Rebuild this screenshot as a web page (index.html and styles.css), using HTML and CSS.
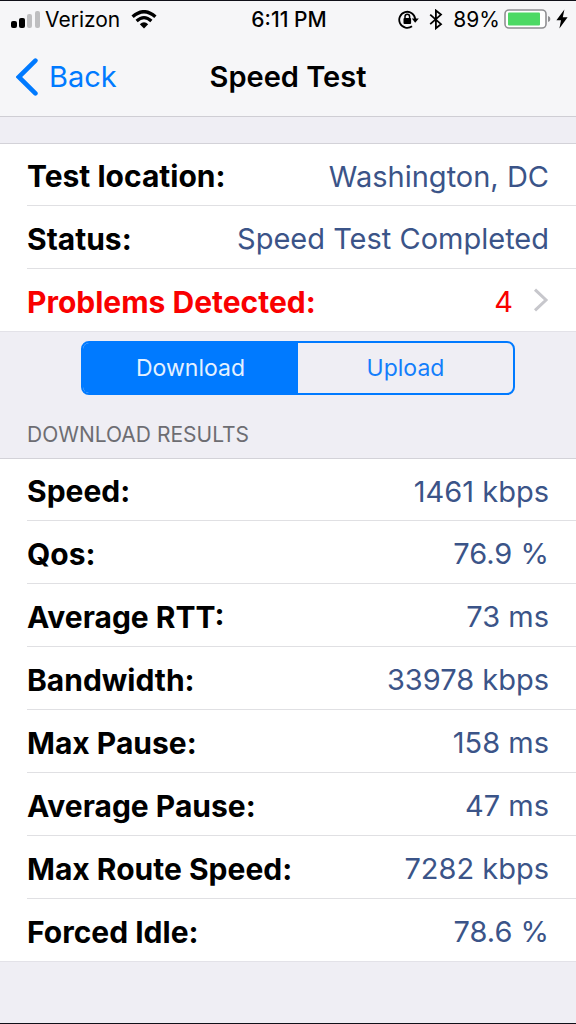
FILE: index.html
```html
<!DOCTYPE html>
<html lang="en">
<head>
<meta charset="utf-8">
<meta name="viewport" content="width=device-width, initial-scale=1">
<title>Speed Test</title>
<link rel="stylesheet" href="styles.css">
</head>
<body>
<header class="header">
  <div class="status-bar">
    <div class="status-left">
      <svg width="30" height="19" viewBox="0 0 30 19" aria-hidden="true">
        <rect x="1" y="11" width="6" height="7" rx="2"/>
        <rect x="9" y="8" width="6" height="10" rx="2"/>
        <rect x="17" y="4" width="5" height="14" rx="2" fill="#bebec0"/>
        <rect x="25" y="1" width="5" height="17" rx="2" fill="#bebec0"/>
      </svg>
      <span>Verizon</span>
      <svg class="wifi" width="26" height="19" viewBox="0 0 26 19" aria-hidden="true">
        <path d="M1.6 6.8Q13-3.4 24.4 6.8" fill="none" stroke="#000" stroke-width="3.4"/>
        <path d="M5.6 11Q13 4.2 20.4 11" fill="none" stroke="#000" stroke-width="3.2"/>
        <path d="M8.8 14.2Q13 10.4 17.2 14.2L13 18.4Z"/>
      </svg>
    </div>
    <time class="clock">6:11 PM</time>
    <div class="status-right">
      <svg width="21" height="19" viewBox="0 0 21 19" aria-hidden="true">
        <path d="M14 16.2A8 8 0 1 1 17.2 9" fill="none" stroke="#000" stroke-width="1.8"/>
        <path d="M13.8 8.4H20.8L17.2 12.8Z"/>
        <rect x="5.5" y="8" width="7.6" height="6" rx="1"/>
        <path d="M7 8.5V6.6a2.3 2.3 0 0 1 4.6 0V8.5" fill="none" stroke="#000" stroke-width="1.5"/>
      </svg>
      <svg class="bluetooth" width="14" height="21" viewBox="0 0 14 21" aria-hidden="true">
        <path d="M1.2 5.6L12 15.2L6.9 19.3V1.5L12 5.6L1.2 15.2" fill="none" stroke="#000" stroke-width="1.8"/>
      </svg>
      <span>89%</span>
      <svg class="battery" width="47" height="20" viewBox="0 0 47 20" aria-hidden="true">
        <rect x="1" y="1" width="41" height="18" rx="4" fill="#fff" stroke="#8f8f92" stroke-width="1.6"/>
        <rect x="4" y="3.5" width="32" height="13" rx="1" fill="#4cd964"/>
        <path d="M44 7Q46.4 7.6 46.4 10T44 13Z" fill="#8f8f92"/>
      </svg>
      <svg class="bolt" width="12" height="20" viewBox="0 0 12 20" aria-hidden="true">
        <path d="M8.4.4L.4 11.2H5L3.4 19.4L11.6 8.2H6.8Z"/>
      </svg>
    </div>
  </div>
  <nav class="nav-bar">
    <a class="back" href="#">
      <svg width="22" height="38" viewBox="0 0 22 38" aria-hidden="true">
        <path d="M19.4 2.6L2.8 19L19.4 35.4" fill="none" stroke="#007aff" stroke-width="4.6" stroke-linecap="round"/>
      </svg>
      Back
    </a>
    <h1 class="title">Speed Test</h1>
  </nav>
</header>
<main class="content">
  <dl class="list">
    <div class="row"><dt>Test location:</dt><dd>Washington, DC</dd></div>
    <div class="row"><dt>Status:</dt><dd>Speed Test Completed</dd></div>
    <div class="row problems">
      <dt>Problems Detected:</dt>
      <dd>
        <a class="problem-link" href="#">4
          <svg class="chevron" width="16" height="24" viewBox="0 0 16 24" aria-hidden="true">
            <path d="M2 1.6L13 12L2 22.4" fill="none" stroke="#c7c7cc" stroke-width="3"/>
          </svg>
        </a>
      </dd>
    </div>
  </dl>
  <div class="segments" role="group" aria-label="Result type">
    <button class="segment selected" type="button" aria-pressed="true">Download</button>
    <button class="segment" type="button" aria-pressed="false">Upload</button>
  </div>
  <h2 class="section-title">DOWNLOAD RESULTS</h2>
  <dl class="list">
    <div class="row"><dt>Speed:</dt><dd>1461 kbps</dd></div>
    <div class="row"><dt>Qos:</dt><dd>76.9 %</dd></div>
    <div class="row"><dt>Average RTT:</dt><dd>73 ms</dd></div>
    <div class="row"><dt>Bandwidth:</dt><dd>33978 kbps</dd></div>
    <div class="row"><dt>Max Pause:</dt><dd>158 ms</dd></div>
    <div class="row"><dt>Average Pause:</dt><dd>47 ms</dd></div>
    <div class="row"><dt>Max Route Speed:</dt><dd>7282 kbps</dd></div>
    <div class="row"><dt>Forced Idle:</dt><dd>78.6 %</dd></div>
  </dl>
</main>
</body>
</html>
```
FILE: styles.css
```css
* {
  box-sizing: border-box;
}

body {
  display: flex;
  flex-direction: column;
  min-height: 100vh;
  margin: 0;
  border-top: 1px solid #101018;
  border-bottom: 1px solid #101018;
  background: #efeef4;
  color: #000;
  font-family: Inter, "Liberation Sans", sans-serif;
  font-size: 29px;
}

svg {
  display: block;
  flex: none;
}

.header {
  border-bottom: 1px solid #cfced4;
  background: #f6f6f8;
}

.status-bar {
  display: grid;
  grid-template-columns: 1fr auto 1fr;
  align-items: center;
  height: 36px;
  padding: 0 8px 0 10px;
  font-size: 21px;
}

.status-left,
.status-right {
  display: flex;
  align-items: center;
}

.status-left {
  gap: 5px;
}

.wifi {
  margin-left: 6px;
}

.status-right {
  justify-content: flex-end;
}

.bluetooth {
  margin: 0 10px;
}

.battery {
  margin: 0 5px 0 4px;
}

.clock {
  font-weight: 500;
}

.nav-bar {
  display: grid;
  grid-template-columns: 1fr auto 1fr;
  align-items: center;
  height: 79px;
  padding: 0 16px;
}

.back {
  display: flex;
  align-items: center;
  gap: 11px;
  color: #007aff;
  text-decoration: none;
}

.title {
  margin: 0;
  font-size: 29px;
  font-weight: 600;
}

.content {
  padding-top: 26px;
}

.list {
  margin: 0;
  border-top: 1px solid #d3d2d8;
  background: #fff;
}

.row {
  display: flex;
  align-items: center;
  justify-content: space-between;
  height: 63px;
  margin-left: 27px;
  padding-right: 27px;
  padding-top: 3px;
  border-bottom: 1px solid #e0e0e3;
}

.row:first-child {
  height: 62px;
}

.row:last-child {
  margin-left: 0;
  padding-left: 27px;
  border-bottom-color: #e3e2e8;
}

.row dt {
  font-size: 30px;
  font-weight: 700;
}

.row dd {
  margin: 0;
  color: #3b5488;
}

.problems dt {
  color: #f90000;
}

.problem-link {
  display: flex;
  align-items: center;
  gap: 20px;
  color: #f90000;
  text-decoration: none;
}

.chevron {
  margin-bottom: 3px;
}

.segments {
  display: flex;
  height: 54px;
  margin: 9px 61px 0 81px;
  overflow: hidden;
  border: 2px solid #007aff;
  border-radius: 8px;
}

.segment {
  flex: 1;
  padding: 0;
  border: 0;
  background: transparent;
  color: #147efb;
  font-family: inherit;
  font-size: 23px;
}

.segment.selected {
  background: #007aff;
  color: #e4f1ff;
}

.section-title {
  margin: 0;
  padding: 26px 27px 10px;
  color: #6d6d72;
  font-size: 21px;
  font-weight: 400;
  line-height: 27px;
}
```
